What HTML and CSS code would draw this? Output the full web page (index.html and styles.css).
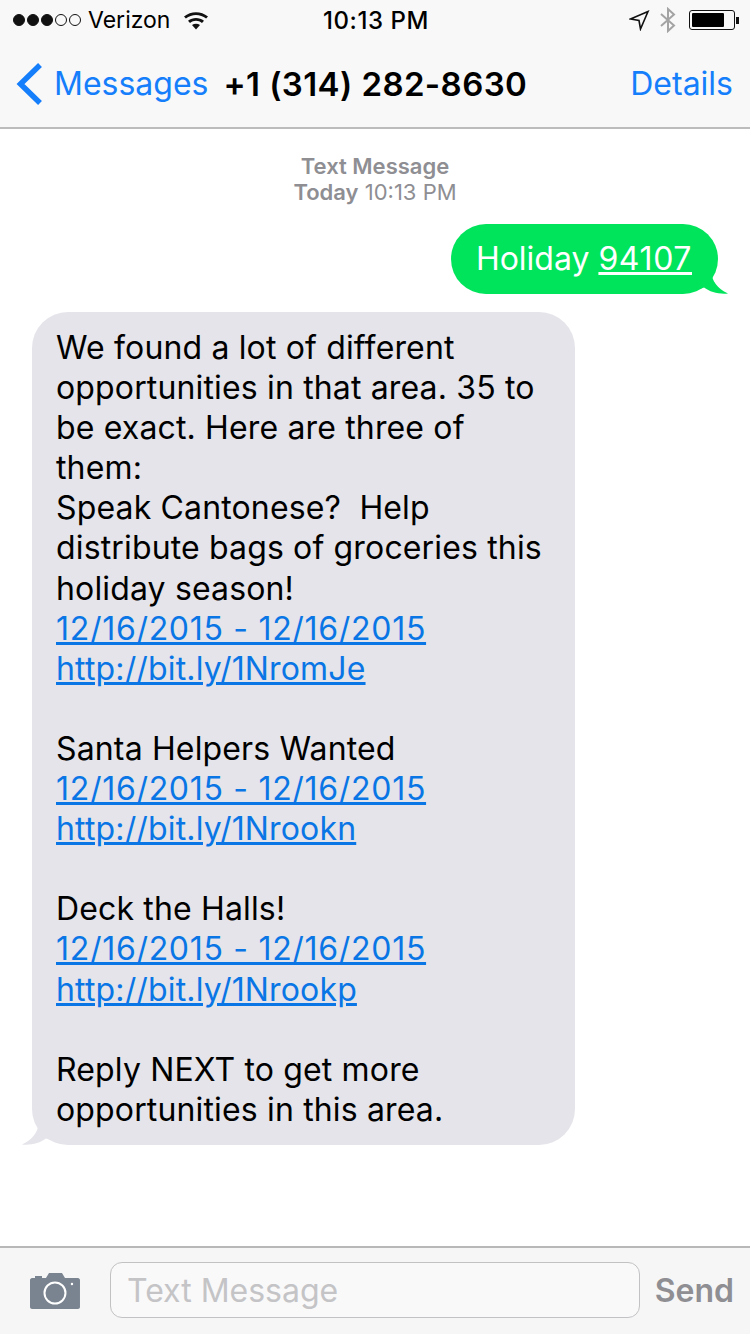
FILE: index.html
```html
<!DOCTYPE html>
<html lang="en">
<head>
    <meta charset="UTF-8">
    <meta name="viewport" content="width=device-width, initial-scale=1.0">
    <title>Messages</title>
    <link rel="stylesheet" href="styles.css">
</head>
<body>

<div class="phone">
    <header class="top">
        <div class="status">
            <div class="status-left">
                <span class="signal">
                    <i class="dot"></i><i class="dot"></i><i class="dot"></i><i class="dot off"></i><i class="dot off"></i>
                </span>
                <span class="carrier">Verizon</span>
                <svg class="wifi" width="26" height="20" viewBox="0 0 26 20">
                    <path d="M1 6.500C8 .8 18 .8 25 6.500L23.100 8.600C17.200 3.900 8.800 3.900 2.900 8.600Z" fill="#111"/>
                    <path d="M5 10.800C9.800 7 16.200 7 21 10.800L19 12.900C15.200 10 10.800 10 7 12.900Z" fill="#111"/>
                    <path d="M9 15C11.500 13.200 14.500 13.200 17 15L13 19.500Z" fill="#111"/>
                </svg>
            </div>
            <div class="clock">10:13 PM</div>
            <div class="status-right">
                <svg class="arrow" width="21" height="21" viewBox="0 0 21 21">
                    <path d="M1.500 9L19 1.500L11.500 19L10 10.500Z" fill="none" stroke="#111" stroke-width="1.600" stroke-linejoin="miter"/>
                </svg>
                <svg class="bt" width="18" height="26" viewBox="0 0 18 26">
                    <path d="M2 7L15 18.500L9 24V2L15 7.500L2 19" fill="none" stroke="#a3a3a3" stroke-width="2"/>
                </svg>
                <div class="battery"><div class="battery-level"></div></div>
                <div class="battery-tip"></div>
            </div>
        </div>
        <nav class="nav">
            <div class="back">
                <svg width="28" height="44" viewBox="0 0 28 44">
                    <path d="M25 3L5.500 22L25 41" fill="none" stroke="#157efb" stroke-width="5.500"/>
                </svg>
                <span>Messages</span>
            </div>
            <div class="contact">+1 (314) 282-8630</div>
            <div class="details">Details</div>
        </nav>
    </header>

    <main class="thread">
        <div class="stamp">
            <div class="stamp-kind">Text Message</div>
            <div><b>Today</b> 10:13 PM</div>
        </div>

        <div class="row row-sent">
            <div class="bubble sent">Holiday <u>94107</u>
                <svg class="tail tail-sent" width="30" height="22" viewBox="0 0 30 22">
                    <path d="M0 0H12C13 8 18 17 29 21.500C20 22.500 11 20 5 15.500L0 17Z" fill="#00e45c"/>
                </svg>
            </div>
        </div>

        <div class="row">
            <div class="bubble received">
                We found a lot of different<br>
                opportunities in that area. 35 to<br>
                be exact. Here are three of<br>
                them:<br>
                Speak Cantonese?&nbsp; Help<br>
                distribute bags of groceries this<br>
                holiday season!<br>
                <a href="#" class="date">12/16/2015 - 12/16/2015</a><br>
                <a href="#">http://bit.ly/1NromJe</a><br>
                <br>
                Santa Helpers Wanted<br>
                <a href="#" class="date">12/16/2015 - 12/16/2015</a><br>
                <a href="#">http://bit.ly/1Nrookn</a><br>
                <br>
                Deck the Halls!<br>
                <a href="#" class="date">12/16/2015 - 12/16/2015</a><br>
                <a href="#">http://bit.ly/1Nrookp</a><br>
                <br>
                Reply NEXT to get more<br>
                opportunities in this area.
                <svg class="tail tail-received" width="30" height="22" viewBox="0 0 30 22">
                    <path d="M30 0H18C17 8 12 17 1 21.500C10 22.500 19 20 25 15.500L30 17Z" fill="#e4e4ea"/>
                </svg>
            </div>
        </div>
    </main>

    <footer class="composer">
        <svg class="camera" width="52" height="40" viewBox="0 0 52 40">
            <path d="M3 8H6V6H13V8H17L20 3H33L36 8H49C50 8 51 9 51 10V37C51 38 50 39 49 39H3C2 39 1 38 1 37V10C1 9 2 8 3 8Z" fill="#7a8490"/>
            <circle cx="26" cy="23" r="10.500" fill="none" stroke="#fff" stroke-width="2"/>
            <circle cx="43" cy="14" r="1.200" fill="#fff"/>
        </svg>
        <div class="field">Text Message</div>
        <div class="send">Send</div>
    </footer>
</div>

</body>
</html>
```

FILE: styles.css
```css
html, body {
    margin: 0;
    padding: 0;
}
body {
    font-family: Inter, "Open Sans", sans-serif;
    background: white;
    color: #000;
}
.phone {
    width: 750px;
    height: 1334px;
    display: flex;
    flex-direction: column;
    overflow: hidden;
}
.top {
    background: #f8f8f8;
    border-bottom: 2px solid #bcbcbc;
}
.status {
    height: 40px;
    display: flex;
    align-items: center;
    justify-content: space-between;
    padding: 0 11px 0 13px;
    font-size: 23px;
}
.status-left {
    width: 250px;
    display: flex;
    align-items: center;
}
.signal {
    display: flex;
    gap: 2px;
    margin-right: 7px;
}
.dot {
    width: 12px;
    height: 12px;
    border-radius: 50%;
    background: #111;
    border: 1px solid #111;
    box-sizing: border-box;
}
.dot.off {
    background: none;
}
.wifi {
    margin-left: 13px;
}
.clock {
    font-weight: 500;
    font-size: 24px;
    letter-spacing: 0.600px;
}
.status-right {
    width: 250px;
    display: flex;
    align-items: center;
    justify-content: flex-end;
}
.arrow {
    margin-right: 9px;
}
.bt {
    margin-right: 12px;
}
.battery {
    width: 46px;
    height: 20px;
    border: 1px solid #111;
    border-radius: 3px;
    padding: 2px;
    box-sizing: border-box;
}
.battery-level {
    width: 32px;
    height: 14px;
    background: #000;
    border-radius: 1px;
}
.battery-tip {
    width: 3px;
    height: 7px;
    background: #111;
    margin-left: 1px;
}
.nav {
    height: 87px;
    display: flex;
    align-items: center;
    padding: 0 17px 0 15px;
    font-size: 32px;
}
.back {
    display: flex;
    align-items: center;
    color: #157efb;
}
.back svg {
    margin-right: 11px;
}
.contact {
    margin-left: 15px;
    font-weight: 600;
    font-size: 33px;
    letter-spacing: 0.400px;
    flex: 1;
}
.details {
    color: #157efb;
}
.thread {
    flex: 1;
}
.stamp {
    margin-top: 24px;
    text-align: center;
    font-size: 22px;
    line-height: 26px;
    color: #8e8e93;
}
.stamp-kind, .stamp b {
    font-weight: 600;
}
.row {
    display: flex;
    padding-left: 32px;
}
.row-sent {
    justify-content: flex-end;
    padding: 0 32px 0 0;
    margin-top: 19px;
    margin-bottom: 18px;
}
.bubble {
    position: relative;
    font-size: 32px;
    line-height: 40.100px;
    letter-spacing: 0.150px;
    white-space: nowrap;
}
.sent {
    background: #00e45c;
    color: white;
    height: 70px;
    line-height: 70px;
    padding: 0 26px 0 25px;
    border-radius: 35px;
    box-sizing: border-box;
    letter-spacing: 0;
}
.sent u {
    letter-spacing: 0.600px;
}
.received {
    background: #e4e4ea;
    width: 543px;
    height: 833px;
    box-sizing: border-box;
    padding: 16px 0 0 24px;
    border-radius: 36px;
}
.received a {
    color: #0a76e6;
}
.received .date {
    letter-spacing: 0.700px;
}
.tail {
    position: absolute;
    bottom: 0;
}
.tail-sent {
    right: -11px;
}
.tail-received {
    left: -11px;
}
.composer {
    height: 88px;
    box-sizing: border-box;
    border-top: 2px solid #b8b8b8;
    background: #f6f6f7;
    display: flex;
    align-items: center;
    padding: 0 16px 2px 29px;
}
.camera {
    margin-right: 29px;
}
.field {
    width: 530px;
    height: 56px;
    line-height: 56px;
    box-sizing: border-box;
    border: 1px solid #c2c2c4;
    border-radius: 12px;
    background: #f9f9fa;
    padding-left: 16px;
    color: #c4c4c6;
    font-size: 32px;
}
.send {
    margin-left: 15px;
    font-size: 32px;
    font-weight: 600;
    color: #8e8e93;
}
```
